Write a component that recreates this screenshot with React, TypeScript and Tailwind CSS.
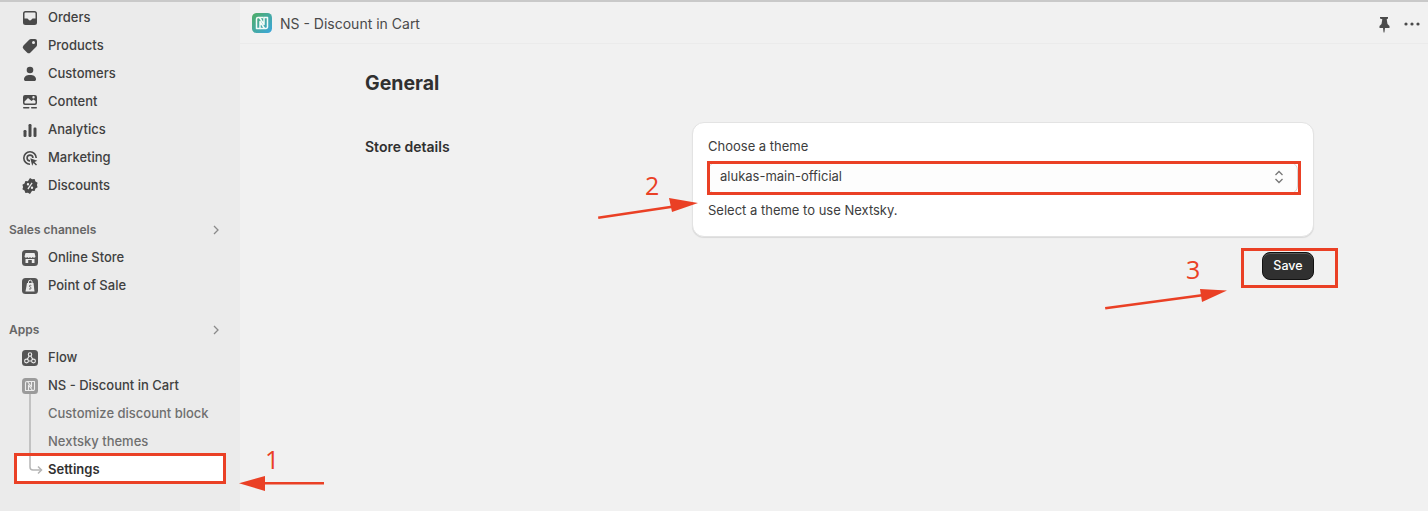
import React from "react";

const I = ({ children }: { children: React.ReactNode }) => (
  <svg width="20" height="20" viewBox="0 0 20 20" fill="#4a4a4a" className="shrink-0">{children}</svg>
);

const icons: Record<string, React.ReactNode> = {
  Orders: <I><path fillRule="evenodd" d="M5.500 3h9A2.500 2.500 0 0 1 17 5.500v9a2.500 2.500 0 0 1-2.500 2.500h-9A2.500 2.500 0 0 1 3 14.500v-9A2.500 2.500 0 0 1 5.500 3Zm-1 7.500v-5a1 1 0 0 1 1-1h9a1 1 0 0 1 1 1v5h-2.700a1 1 0 0 0-.9.600 2 2 0 0 1-3.800 0 1 1 0 0 0-.9-.6H4.500Z" /></I>,
  Products: <I><path fillRule="evenodd" d="M11 3h4a2 2 0 0 1 2 2v4a2.500 2.500 0 0 1-.8 1.800l-5.700 5.700a2.500 2.500 0 0 1-3.500 0l-3.500-3.500a2.500 2.500 0 0 1 0-3.500l5.700-5.700A2.500 2.500 0 0 1 11 3Zm2.500 5a1.500 1.500 0 1 0 0-3 1.500 1.500 0 0 0 0 3Z" /></I>,
  Customers: <I><circle cx="10" cy="6" r="3.300" /><path d="M4 15.200C4 12.500 6.500 11 10 11s6 1.500 6 4.200c0 1-.7 1.800-1.700 1.800H5.700C4.700 17 4 16.200 4 15.200Z" /></I>,
  Content: <I><path fillRule="evenodd" d="M5 3h10a2 2 0 0 1 2 2v6a2 2 0 0 1-2 2H5a2 2 0 0 1-2-2V5a2 2 0 0 1 2-2Zm8.500 3.500a1.200 1.200 0 1 0 0-2.400 1.200 1.200 0 0 0 0 2.400ZM4.500 9.500v1.300c0 .4.300.7.700.7h9.600c.4 0 .7-.3.700-.7V9l-2-1.500-2 1.500-3.500-3-3.500 3.500Z" /><rect x="3" y="15" width="6.500" height="1.500" rx=".7" /><rect x="11" y="15" width="6" height="1.500" rx=".7" /></I>,
  Analytics: <I><rect x="3.500" y="10" width="3" height="7" rx="1.200" /><rect x="8.500" y="4" width="3" height="13" rx="1.200" /><rect x="13.500" y="7.500" width="3" height="9.500" rx="1.200" /></I>,
  Marketing: <I><path fillRule="evenodd" d="M10 3a7 7 0 0 1 7 7h-1.600A5.400 5.400 0 1 0 10 15.400V17a7 7 0 0 1 0-14Zm0 3.300A3.700 3.700 0 0 1 13.700 10h-1.600A2.100 2.100 0 1 0 10 12.100v1.600a3.700 3.700 0 0 1 0-7.400Z" /><path d="m10.300 10.300 7 2.400-2.800 1.300 2.500 2.500-1 1-2.500-2.500-1.300 2.800-1.900-7.500Z" /></I>,
  Discounts: <I><path fillRule="evenodd" d="m10 2 2.100 1.300 2.500-.2.900 2.300 2.100 1.400-.7 2.200.7 2.200-2.100 1.400-.9 2.300-2.500-.2L10 18l-2.100-1.300-2.500.2-.9-2.300-2.100-1.400.7-2.200-.7-2.200 2.100-1.400.9-2.300 2.500.2L10 2Zm-2 5a1.200 1.200 0 1 0 0 2.400A1.200 1.200 0 0 0 8 7Zm4 3.600a1.200 1.200 0 1 0 0 2.400 1.200 1.200 0 0 0 0-2.400ZM12.600 7.300l-1-.9-4.200 6.200 1 .9 4.200-6.200Z" /></I>,
};

const Tile = ({ children, color = "#555555" }: { children: React.ReactNode; color?: string }) => (
  <svg width="16" height="16" viewBox="0 0 16 16" className="shrink-0 mx-[2px]">
    <rect width="16" height="16" rx="3.500" fill={color} />
    {children}
  </svg>
);

const NLogo = ({ stroke }: { stroke: string }) => (
  <g fill="none" stroke={stroke} strokeWidth="1.100" strokeLinejoin="round">
    <path d="M9.500 3.500H5a1.500 1.500 0 0 0-1.500 1.500v7.500H6.500V7l4 5.500" />
    <path d="M6.500 12.500H11a1.500 1.500 0 0 0 1.500-1.500V3.500H9.500V9l-4-5.500" />
  </g>
);

const tiles: Record<string, React.ReactNode> = {
  "Online Store": <Tile><path d="M3.500 3h9l1 3.500a1.500 1.500 0 0 1-2.800.5 1.700 1.700 0 0 1-2.700 0 1.700 1.700 0 0 1-2.700 0 1.500 1.500 0 0 1-2.800-.5l1-3.500Z" fill="#ececec" /><path d="M3.500 9h9v4H9.800v-3H6.200v3H3.500V9Z" fill="#ececec" /></Tile>,
  "Point of Sale": <Tile><path d="M5 5h6.500L12.500 13.500H3.500L5 5Z" fill="#ececec" /><path d="M6.500 5V4a1.800 1.800 0 0 1 3.600 0v1" fill="none" stroke="#ececec" strokeWidth="1" /><path d="M9.300 7.500c-.9-.5-1.900-.2-1.900.6 0 1 1.700.9 1.700 2 0 1-1.200 1.200-2.100.7" fill="none" stroke="#555555" strokeWidth=".9" /></Tile>,
  Flow: <Tile><g fill="none" stroke="#ececec" strokeWidth="1.100"><circle cx="8" cy="4.500" r="1.700" /><circle cx="4.500" cy="11" r="1.900" /><circle cx="11.500" cy="11" r="1.900" /><path d="M7.200 6 5.300 9.300M8.800 6l1.900 3.300M6.500 11h3" /></g></Tile>,
  "NS - Discount in Cart": <Tile color="#9b9b9b"><NLogo stroke="#ededed" /></Tile>,
};

const NavRow = ({ label, children }: { label: string; children: React.ReactNode }) => (
  <div className="flex items-center h-7 pl-[20px] gap-2 text-[13px] font-[500] text-[#404040]">
    {children}
    <span>{label}</span>
  </div>
);

const SectionHead = ({ label }: { label: string }) => (
  <div className="flex items-center justify-between h-7 pl-[9px] pr-[16px] text-[12px] font-[600] text-[#666666]">
    <span>{label}</span>
    <svg width="16" height="16" viewBox="0 0 16 16" fill="none" stroke="#8a8a8a" strokeWidth="1.300"><path d="m6 4 4 4-4 4" /></svg>
  </div>
);

const SubRow = ({ label }: { label: string }) => (
  <div className="flex items-center h-7 pl-[48px] text-[13px] font-[500] text-[#6f6f6f]">{label}</div>
);

export default function App() {
  return (
    <div className="relative w-[1428px] h-[511px] overflow-hidden bg-[#f1f1f1] border-t-[2px] border-[#c9c9c9] flex font-['Inter',sans-serif]">
      <aside className="w-[240px] shrink-0 bg-[#ebebeb] pt-[2px]">
        {["Orders", "Products", "Customers", "Content", "Analytics", "Marketing", "Discounts"].map((n) => (
          <NavRow key={n} label={n}>{icons[n]}</NavRow>
        ))}
        <div className="mt-[16px]"><SectionHead label="Sales channels" /></div>
        <NavRow label="Online Store">{tiles["Online Store"]}</NavRow>
        <NavRow label="Point of Sale">{tiles["Point of Sale"]}</NavRow>
        <div className="mt-[16px]"><SectionHead label="Apps" /></div>
        <NavRow label="Flow">{tiles.Flow}</NavRow>
        <NavRow label="NS - Discount in Cart">{tiles["NS - Discount in Cart"]}</NavRow>
        <div className="relative">
          <SubRow label="Customize discount block" />
          <SubRow label="Nextsky themes" />
          <div className="flex items-center h-7 ml-[16px] w-[208px] pl-[32px] bg-white text-[13px] font-[600] text-[#303030]">Settings</div>
          <svg className="absolute left-[28px] top-[-6px]" width="16" height="84" viewBox="0 0 16 84" fill="none" stroke="#b5b5b5" strokeWidth="1.500">
            <path d="M2 0v73a3 3 0 0 0 3 3h8" />
            <path d="m10 72.500 3.500 3.500-3.500 3.500" />
          </svg>
        </div>
      </aside>

      <main className="flex-1 min-w-0">
        <header className="h-[42px] border-b border-[#ebebeb] flex items-center pt-[1px] pl-[12px] pr-[6px] gap-[8px] text-[#4a4a4a]">
          <svg width="20" height="20" viewBox="0 0 20 20" className="shrink-0">
            <defs>
              <linearGradient id="ns" x1="0" y1="0" x2="1" y2="1">
                <stop offset="0" stopColor="#4fae63" />
                <stop offset="1" stopColor="#3ba6e0" />
              </linearGradient>
            </defs>
            <rect width="20" height="20" rx="4.500" fill="url(#ns)" />
            <g fill="none" stroke="#f4fbf8" strokeWidth="1.500" strokeLinejoin="round">
              <path d="M11.500 4.500H6A1.500 1.500 0 0 0 4.500 6v9.500H8V8.500l4.500 7" />
              <path d="M8 15.500h6a1.500 1.500 0 0 0 1.500-1.500V4.500H12v7l-4.500-7" />
            </g>
          </svg>
          <span className="text-[14px] font-[400]">NS - Discount in Cart</span>
          <div className="ml-auto flex items-center gap-[8px] relative top-[1px]">
            <svg width="20" height="20" viewBox="0 0 20 20" fill="#4a4a4a"><path d="M6 3h8v1.500l-1.300.8.800 4.700 2 2V14h-4.500l-.6 4.500h-.8l-.6-4.500H5.500v-2l2-2 .8-4.700L6 4.500V3Z" /></svg>
            <svg width="20" height="20" viewBox="0 0 20 20" fill="#4a4a4a"><circle cx="4" cy="10" r="1.600" /><circle cx="10" cy="10" r="1.600" /><circle cx="16" cy="10" r="1.600" /></svg>
          </div>
        </header>

        <div className="pl-[125px] pt-[26px]">
          <h1 className="text-[19.500px] leading-[26px] font-[700] text-[#303030]">General</h1>
          <div className="flex mt-[26px]">
            <div className="w-[327px] pt-[16px] text-[14px] leading-[17px] font-[600] text-[#303030]">Store details</div>
            <div className="w-[622px]">
              <section className="h-[115px] rounded-[12px] border border-[#e3e3e3] bg-white shadow-[0_1px_1px_rgba(0,0,0,0.1)] px-[15px] pt-[14px] text-[13px] text-[#3d3d3d]">
                <div className="leading-[18px]">Choose a theme</div>
                <div className="mt-[7px] h-[32px] rounded-[8px] border border-[#d8d8d8] bg-[#fdfdfd] flex items-center justify-between pl-[11px] pr-[10px]">
                  <span className="relative top-[-1px]">alukas-main-official</span>
                  <svg width="16" height="16" viewBox="0 0 16 16" fill="none" stroke="#777777" strokeWidth="1.300" className="relative top-[-1px]"><path d="m4.500 6 3.500-3.500L11.500 6M4.500 10l3.500 3.500 3.500-3.500" /></svg>
                </div>
                <div className="mt-[7px] leading-[18px]">Select a theme to use Nextsky.</div>
              </section>
              <div className="flex justify-end mt-[15px]">
                <button className="h-[28px] w-[52px] rounded-[8px] bg-[#303030] border border-[#111111] shadow-[inset_0_1px_0_rgba(255,255,255,0.2)] text-white text-[12.500px] font-[550]">Save</button>
              </div>
            </div>
          </div>
        </div>
      </main>

      {/* annotations over the page */}
      <div className="absolute left-[14px] top-[451px] w-[212px] h-[31px] border-[3px] border-[#ea4025]" />
      <div className="absolute left-[707px] top-[159px] w-[594px] h-[34px] border-[3px] border-[#ea4025]" />
      <div className="absolute left-[1241px] top-[246px] w-[97px] h-[40px] border-[3px] border-[#ea4025]" />
      <span className="absolute left-[265px] top-[441px] text-[25px] leading-[32px] text-[#ea4025] font-['Open_Sans',sans-serif]">1</span>
      <span className="absolute left-[645px] top-[167px] text-[25px] leading-[32px] text-[#ea4025] font-['Open_Sans',sans-serif]">2</span>
      <span className="absolute left-[1186px] top-[251px] text-[25px] leading-[32px] text-[#ea4025] font-['Open_Sans',sans-serif]">3</span>
      <svg className="absolute left-0 top-[-2px]" width="1428" height="511" viewBox="0 0 1428 511" fill="#ea4025" stroke="none">
        <rect x="262" y="482" width="62" height="2.500" />
        <path d="M239 483.200 265 476v15Z" />
        <path d="M598 216.500 672 205.500l.4 2.500-74 11Z" />
        <path d="M698 203 669 198l3 14Z" />
        <path d="M1105 307 1202 294l.4 2.500-97 13Z" />
        <path d="M1227 290.500 1200 289l2 13Z" />
      </svg>
    </div>
  );
}
